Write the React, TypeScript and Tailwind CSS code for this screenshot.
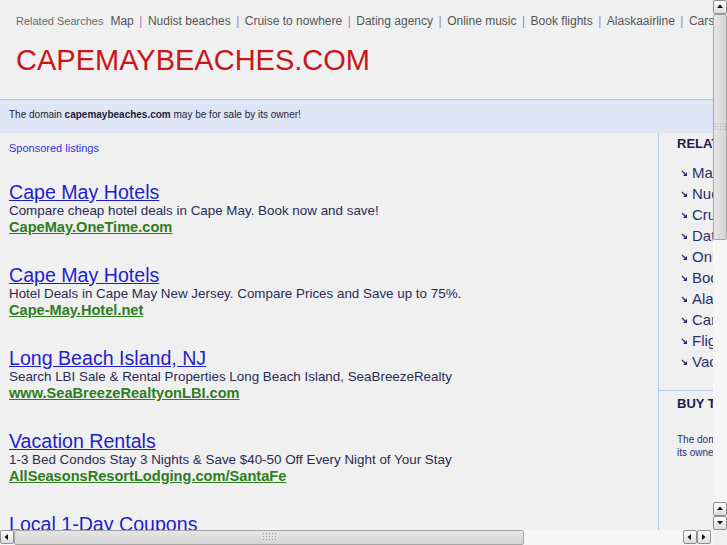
import React from "react";

const related = [
  "Map",
  "Nudist beaches",
  "Cruise to nowhere",
  "Dating agency",
  "Online music",
  "Book flights",
  "Alaskaairline",
  "Cars",
  "Flights",
  "Vacation rentals",
];

const listings = [
  {
    title: "Cape May Hotels",
    desc: "Compare cheap hotel deals in Cape May. Book now and save!",
    url: "CapeMay.OneTime.com",
  },
  {
    title: "Cape May Hotels",
    desc: "Hotel Deals in Cape May New Jersey. Compare Prices and Save up to 75%.",
    url: "Cape-May.Hotel.net",
  },
  {
    title: "Long Beach Island, NJ",
    desc: "Search LBI Sale & Rental Properties Long Beach Island, SeaBreezeRealty",
    url: "www.SeaBreezeRealtyonLBI.com",
  },
  {
    title: "Vacation Rentals",
    desc: "1-3 Bed Condos Stay 3 Nights & Save $40-50 Off Every Night of Your Stay",
    url: "AllSeasonsResortLodging.com/SantaFe",
  },
  {
    title: "Local 1-Day Coupons",
    desc: "Get 50-90% off the best things to do, see, eat, and buy in your city.",
    url: "www.Groupon.com",
  },
];

// small triangle used on the scrollbar buttons
const Tri = ({ dir }: { dir: "up" | "down" | "left" | "right" }) => {
  const pts = {
    up: "1,5 4,1.5 7,5",
    down: "1,2 4,5.5 7,2",
    left: "5,1 1.5,4 5,7",
    right: "2,1 5.5,4 2,7",
  }[dir];
  return (
    <svg width="8" height="8" viewBox="0 0 8 8">
      <polygon points={pts} fill="#111" />
    </svg>
  );
};

const Btn = ({ dir }: { dir: "up" | "down" | "left" | "right" }) => (
  <div className="flex h-[14px] w-[14px] shrink-0 items-center justify-center rounded-[2px] border border-[#8f8f8f] bg-gradient-to-b from-[#ffffff] to-[#dcdcdc]">
    <Tri dir={dir} />
  </div>
);

const Grip = () => (
  <svg width="14" height="9" viewBox="0 0 14 9">
    {[0, 1, 2, 3, 4].map((c) =>
      [0, 1, 2].map((r) => (
        <rect key={`${c}-${r}`} x={1 + c * 3} y={r * 3} width="1" height="1" fill="#9a9a9a" />
      ))
    )}
  </svg>
);

const Arrow = () => (
  <svg width="7" height="7" viewBox="0 0 7 7" className="shrink-0">
    <path d="M1 1 L5 5" stroke="#283070" strokeWidth="1.2" />
    <polygon points="6,2 6,6 2,6" fill="#283070" />
  </svg>
);

export default function App() {
  return (
    <div
      className="flex h-[545px] w-[727px] flex-col overflow-hidden bg-[#f0f0f0]"
      style={{ fontFamily: '"Liberation Sans", Arial, sans-serif' }}
    >
      <div className="flex h-[530px]">
        {/* page viewport */}
        <div className="w-[713px] overflow-hidden">
          <div className="w-[960px]">
            {/* header */}
            <div className="h-[100px] border-b border-[#b4c4e0] pl-4">
              <div className="flex items-center whitespace-nowrap pt-[14px] leading-[15px]">
                <span className="mr-[7px] text-[11px] text-[#6a6a6a]">Related Searches</span>
                {related.slice(0, 8).map((r, i) => (
                  <span key={r} className="flex items-center text-[12px] text-[#555]">
                    {i > 0 && <span className="px-[5.5px] text-[#9a7fc0]">|</span>}
                    {r}
                  </span>
                ))}
              </div>
              <div className="pt-[14px] text-[29px] leading-[34px] text-[#c8161d]">
                CAPEMAYBEACHES.COM
              </div>
            </div>

            {/* for sale banner */}
            <div className="h-[33px] bg-[#dfe6f6] pl-[9px] pt-[9px] text-[10px] leading-[12px] text-[#1c1c3c]">
              The domain <b>capemaybeaches.com</b> may be for sale by its owner!
            </div>

            <div className="flex h-[400px]">
              {/* listings */}
              <div className="w-[659px] shrink-0 border-r border-[#b7c9ea] pl-[9px]">
                <div className="pt-[8px] text-[11px] leading-[14px] text-[#3333dd]">
                  Sponsored listings
                </div>
                <div className="pt-[26px]">
                  {listings.map((l, i) => (
                    <div key={i} className="h-[83px] whitespace-nowrap">
                      <div className="text-[19.6px] leading-[22px] text-[#1f1fcc] underline">
                        {l.title}
                      </div>
                      <div className="text-[13.4px] leading-[16px] text-[#2b2b55]">{l.desc}</div>
                      <div className="text-[14.6px] font-bold leading-[17px] text-[#2e7d1e] underline">
                        {l.url}
                      </div>
                    </div>
                  ))}
                </div>
              </div>

              {/* sidebar */}
              <div className="w-[300px] shrink-0">
                <div className="pl-[18px]">
                  <div className="pt-[3px] text-[13px] font-bold leading-[16px] text-[#1b1b4b]">
                    RELATED SEARCHES
                  </div>
                  <ul className="pt-[11px]">
                    {related.map((r) => (
                      <li key={r} className="flex h-[21px] items-center gap-[4px] whitespace-nowrap pl-[4px] text-[15px] text-[#283070]">
                        <Arrow />
                        {r}
                      </li>
                    ))}
                  </ul>
                </div>
                <div className="mt-[17px] border-t border-[#b7c9ea] pl-[18px]">
                  <div className="pt-[5px] text-[13px] font-bold leading-[16px] text-[#1b1b4b]">
                    BUY THIS DOMAIN
                  </div>
                  <div className="w-[248px] pt-[21px] text-[10px] leading-[13px] text-[#283070]">
                    The domain capemaybeaches.com may be for sale by its owner!
                  </div>
                </div>
              </div>
            </div>
          </div>
        </div>

        {/* vertical scrollbar */}
        <div className="flex w-[14px] flex-col bg-[#f6f6f6]">
          <Btn dir="up" />
          <div className="flex h-[226px] items-center justify-center rounded-[2px] border border-[#a6a6a6] bg-gradient-to-r from-[#e6e6e6] to-[#d4d4d4]">
            <Grip />
          </div>
          <div className="flex-1" />
          <Btn dir="up" />
          <Btn dir="down" />
        </div>
      </div>

      {/* horizontal scrollbar */}
      <div className="flex h-[15px]">
        <div className="flex w-[713px] bg-[#f6f6f6]">
          <Btn dir="left" />
          <div className="flex w-[510px] items-center justify-center rounded-[2px] border border-[#a6a6a6] bg-gradient-to-b from-[#e6e6e6] to-[#d4d4d4]">
            <Grip />
          </div>
          <div className="flex-1" />
          <Btn dir="left" />
          <Btn dir="right" />
          <div className="w-[2px]" />
        </div>
        <div className="flex-1 bg-[#f0f0f0]" />
      </div>
    </div>
  );
}
